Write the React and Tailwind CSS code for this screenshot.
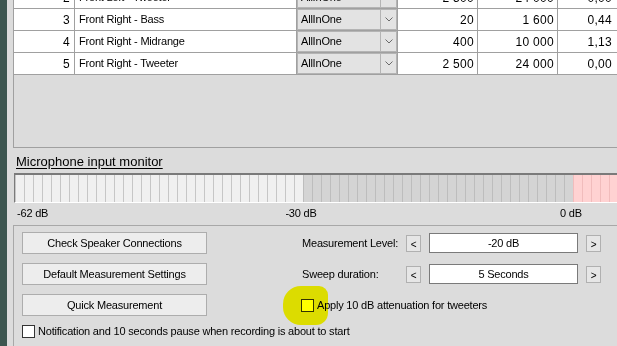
import React from 'react';

const rows = [
  { n: 2, name: 'Front Left - Tweeter', a: '2 500', b: '24 000', c: '0,00' },
  { n: 3, name: 'Front Right - Bass', a: '20', b: '1 600', c: '0,44' },
  { n: 4, name: 'Front Right - Midrange', a: '400', b: '10 000', c: '1,13' },
  { n: 5, name: 'Front Right - Tweeter', a: '2 500', b: '24 000', c: '0,00' },
];

function Chevron() {
  return (
    <svg width="8" height="5" viewBox="0 0 8 5">
      <path d="M0.5 0.5 L4 4 L7.5 0.5" fill="none" stroke="#6a6a6a" strokeWidth="1" />
    </svg>
  );
}

function Row({ r, first }) {
  return (
    <div className={`flex h-[22px] shrink-0 border-b border-[#a0a0a0] bg-white ${first ? '-mt-[13px]' : ''}`}>
      <div className="w-[61px] shrink-0 border-r border-[#a0a0a0] pr-[4px] flex items-center justify-end text-[12px] tracking-[0.3px]">{r.n}</div>
      <div className="w-[222px] shrink-0 border-r border-[#a0a0a0] pl-[4px] flex items-center">{r.name}</div>
      <div className="w-[101px] shrink-0 border-r border-[#a0a0a0] flex">
        <div className="flex-1 flex border border-[#b4b4b4] bg-[#e3e3e3]">
          <div className="flex-1 pl-[3px] flex items-center">AllInOne</div>
          <div className="w-[16px] border-l border-[#b4b4b4] flex items-center justify-center">
            <Chevron />
          </div>
        </div>
      </div>
      <div className="w-[80px] shrink-0 border-r border-[#a0a0a0] pr-[3px] flex items-center justify-end text-[12px] tracking-[0.3px]">{r.a}</div>
      <div className="w-[80px] shrink-0 border-r border-[#a0a0a0] pr-[3px] flex items-center justify-end text-[12px] tracking-[0.3px]">{r.b}</div>
      <div className="w-[57px] shrink-0 pr-[3px] flex items-center justify-end text-[12px] tracking-[0.3px]">{r.c}</div>
    </div>
  );
}

function Btn({ children }) {
  return (
    <div className="h-[22px] w-[185px] border border-[#adadad] bg-[#ededed] flex items-center justify-center">
      {children}
    </div>
  );
}

function Small({ children }) {
  return (
    <div className="w-[15px] h-[17px] shrink-0 border border-[#b0b0b0] bg-[#e6e6e6] flex items-center justify-center text-[10px] pt-[2px]">
      {children}
    </div>
  );
}

function Box({ children }) {
  return (
    <div className="w-[149px] h-[20px] shrink-0 border border-[#7a7a7a] bg-white flex items-center justify-center">
      {children}
    </div>
  );
}

export default function App() {
  const light = Array.from({ length: 32 });
  const mid = Array.from({ length: 30 });
  const pink = Array.from({ length: 8 });
  return (
    <div className="w-[617px] h-[346px] overflow-hidden flex bg-[#dcdcdc] text-black text-[11px] tracking-[-0.2px] font-['Liberation_Sans',Arial,sans-serif]">
      <div className="w-[7px] shrink-0 bg-[#3d5650]" />
      <div className="flex-1 min-w-0 pl-[6px] flex flex-col">
        {/* data grid */}
        <div className="h-[148px] shrink-0 border-l border-b border-[#a0a0a0] overflow-hidden flex flex-col">
          {rows.map((r, i) => (
            <Row key={r.n} r={r} first={i === 0} />
          ))}
        </div>

        {/* mic monitor */}
        <div className="mt-[7px] h-[14px] pl-[3px] leading-[14px] text-[13px] tracking-normal underline underline-offset-[2px]">Microphone input monitor</div>
        <div className="ml-[1px] mt-[4px] h-[30px] shrink-0 flex border-l border-t-2 border-b border-l-[#7a7a7a] border-t-[#7a7a7a] border-b-white overflow-hidden">
          {light.map((_, i) => (
            <div key={'l' + i} className="w-[9px] shrink-0 border-l border-[#c6c6c6] bg-[#f0f0f0]" />
          ))}
          {mid.map((_, i) => (
            <div key={'m' + i} className="w-[9px] shrink-0 border-l border-[#bdbdbd] bg-[#d4d4d4]" />
          ))}
          {pink.map((_, i) => (
            <div key={'p' + i} className="w-[9px] shrink-0 border-l border-[#f1bcbc] bg-[#ffd2d2]" />
          ))}
        </div>
        <div className="mt-[3px] h-[14px] leading-[14px] flex">
          <div className="w-[258px] shrink-0 pl-[4px]">-62 dB</div>
          <div className="w-[60px] shrink-0 text-center">-30 dB</div>
          <div className="ml-[210px] w-[60px] shrink-0 text-center">0 dB</div>
        </div>

        {/* group box */}
        <div className="mt-[5px] flex-1 border-t border-l border-[#a8a8a8] pl-[8px] pt-[6px] flex flex-col">
          <div className="flex">
            <div className="w-[185px] shrink-0 flex flex-col gap-[9px]">
              <Btn>Check Speaker Connections</Btn>
              <Btn>Default Measurement Settings</Btn>
              <Btn>Quick Measurement</Btn>
            </div>
            <div className="ml-[94px] flex flex-col gap-[9px]">
              <div className="h-[22px] flex items-center">
                <div className="w-[105px] shrink-0 pl-[1px]">Measurement Level:</div>
                <Small>&lt;</Small>
                <div className="ml-[8px]"><Box>-20 dB</Box></div>
                <div className="ml-[8px]"><Small>&gt;</Small></div>
              </div>
              <div className="h-[22px] flex items-center">
                <div className="w-[105px] shrink-0 pl-[1px]">Sweep duration:</div>
                <Small>&lt;</Small>
                <div className="ml-[8px]"><Box>5 Seconds</Box></div>
                <div className="ml-[8px]"><Small>&gt;</Small></div>
              </div>
              <div className="relative h-[22px] flex items-center">
                <div className="w-[13px] h-[13px] shrink-0 border border-[#333333] bg-white" />
                <div className="ml-[3px]">Apply 10 dB attenuation for tweeters</div>
                <div className="absolute left-[-18px] top-[-8px] w-[45px] h-[39px] bg-[#ffff00] mix-blend-multiply rounded-[18px_9px_12px_18px]" />
              </div>
            </div>
          </div>
          <div className="mt-[9px] h-[13px] flex items-center">
            <div className="w-[13px] h-[13px] shrink-0 border border-[#333333] bg-white" />
            <div className="ml-[3px] whitespace-nowrap">Notification and 10 seconds pause when recording is about to start</div>
          </div>
        </div>
      </div>
    </div>
  );
}
